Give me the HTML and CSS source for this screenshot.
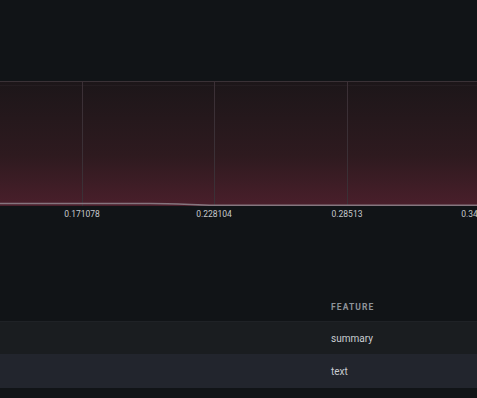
FILE: index.html
```html
<!DOCTYPE html>
<html lang="en">

<head>
    <meta charset="UTF-8">
    <meta name="viewport" content="width=device-width, initial-scale=1.0">
    <title>Distribution</title>
    <link rel="stylesheet" href="styles.css">
</head>

<body>
    <div class="page">
        <div class="chart">
            <svg class="plot" width="477" height="125" viewBox="0 0 477 125">
                <defs>
                    <linearGradient id="fade" x1="0" y1="0" x2="0" y2="1">
                        <stop offset="0" stop-color="#1c1619" />
                        <stop offset="0.6" stop-color="#2e1a1f" />
                        <stop offset="1" stop-color="#4a1f2b" />
                    </linearGradient>
                </defs>
                <rect x="0" y="0" width="477" height="125" fill="url(#fade)" />
                <line x1="0" y1="0.5" x2="477" y2="0.5" stroke="#3a3136" />
                <line x1="0" y1="4.5" x2="477" y2="4.5" stroke="#241c20" />
                <line x1="82.5" y1="0" x2="82.5" y2="125" stroke="#3b3036" />
                <line x1="214.5" y1="0" x2="214.5" y2="125" stroke="#3b3036" />
                <line x1="347.5" y1="0" x2="347.5" y2="125" stroke="#3b3036" />
                <path d="M0 122.5 L150 122.5 C175 122.5 195 124 214 124.3 L477 124.3" fill="none" stroke="#86767f" stroke-width="1.6" />
            </svg>
            <div class="axis">
                <span class="tick" style="left: 82px">0.171078</span>
                <span class="tick" style="left: 214px">0.228104</span>
                <span class="tick" style="left: 347px">0.28513</span>
                <span class="tick" style="left: 479px">0.342156</span>
            </div>
        </div>

        <div class="table">
            <div class="row head">
                <div class="cell"></div>
                <div class="cell">FEATURE</div>
            </div>
            <div class="row odd">
                <div class="cell"></div>
                <div class="cell">summary</div>
            </div>
            <div class="row even">
                <div class="cell"></div>
                <div class="cell">text</div>
            </div>
        </div>
    </div>
</body>

</html>
```

FILE: styles.css
```css
body {
    margin: 0;
    background: #111417;
    font-family: Roboto, 'Liberation Sans', sans-serif;
    overflow: hidden;
}

.page {
    padding-top: 81px;
}

.chart {
    position: relative;
}

.plot {
    display: block;
}

.axis {
    position: relative;
    height: 20px;
}

.tick {
    position: absolute;
    top: 3px;
    transform: translateX(-50%);
    font-size: 8.5px;
    color: #c6c9cd;
    white-space: nowrap;
}

.table {
    margin-top: 67px;
}

.row {
    display: grid;
    grid-template-columns: 320px 1fr;
    align-items: center;
}

.cell {
    padding-left: 11px;
}

.head {
    height: 28px;
    font-size: 8.5px;
    font-weight: 700;
    letter-spacing: 1.1px;
    color: #8e9399;
}

.odd {
    height: 32px;
    background: #1a1d20;
    border-top: 1px solid #1f2226;
    font-size: 10px;
    color: #c9cdd1;
}

.even {
    height: 34px;
    background: #22252d;
    font-size: 10px;
    color: #c9cdd1;
}
```
